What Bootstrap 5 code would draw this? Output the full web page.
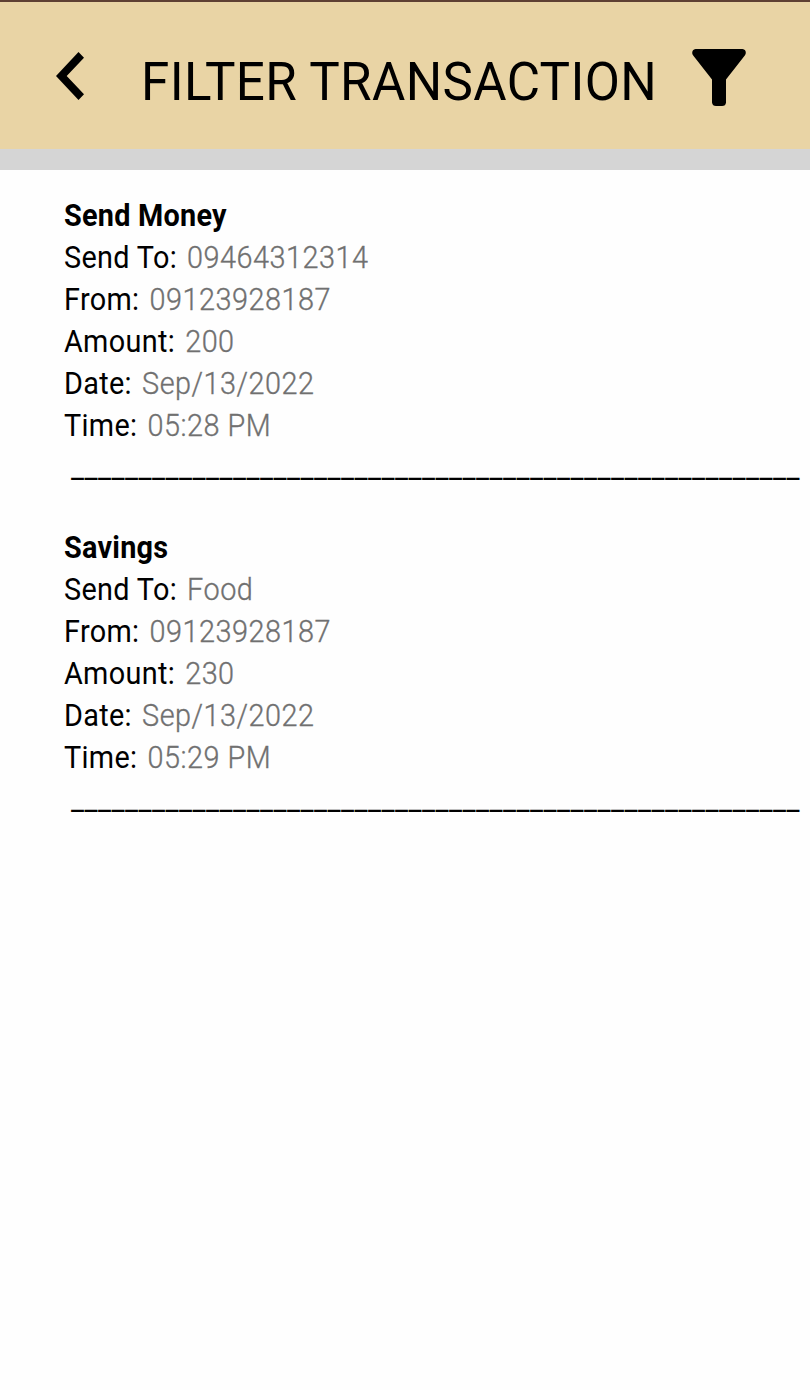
<!DOCTYPE html>
<html lang="en">
<head>
<meta charset="utf-8">
<meta name="viewport" content="width=device-width, initial-scale=1">
<title>Filter Transaction</title>
<link href="https://cdn.jsdelivr.net/npm/bootstrap@5.3.0/dist/css/bootstrap.min.css" rel="stylesheet">
<style>
body { font-family: Roboto, sans-serif; color: #000; background: #fefefe; min-height: 1390px; overflow-x: hidden; }
.topbar { height: 149px; background: #e9d4a5; border-top: 2px solid #5e3f33; padding-left: 56px; padding-right: 64px; }
.topbar-title { font-size: 54.5px; line-height: 64px; width: 514px; margin: 10px 0 0 57px; white-space: nowrap; }
.topbar-title span { display: inline-block; letter-spacing: .4px; transform-origin: 0 50%; transform: scaleX(.938); }
.back-icon { margin-top: 1px; }
.filter-icon { margin-top: 4px; }
.divider-band { height: 21px; background: #d5d5d5; }
.entries { margin: 25px 0 0 64px; font-size: 31px; line-height: 42px; letter-spacing: .46px; white-space: nowrap; transform-origin: 0 0; transform: scaleX(.93); }
.entry { margin-bottom: 38px; }
.entry dt, .entry dd { margin: 0; line-height: 42px; }
.entry dt { font-weight: 400; letter-spacing: .34px; margin-right: 2.9px; }
.entry dd { font-weight: 300; color: #707070; letter-spacing: .54px; -webkit-text-stroke: .35px #707070; }
.entry h2 { font-size: 31px; line-height: 42px; font-weight: 700; letter-spacing: .25px; }
.rule-text { padding-left: 7.5px; letter-spacing: .53px; }
</style>
</head>
<body>
<header class="topbar d-flex align-items-center">
  <a href="#" class="back-icon d-flex text-black" aria-label="Back"><svg width="28" height="48" viewBox="0 0 28 48"><path d="M22.5 0 28 5.7 10.7 24 28 42.2 22.5 48 0 24Z"/></svg></a>
  <h1 class="topbar-title fw-normal"><span>FILTER TRANSACTION</span></h1>
  <a href="#" class="filter-icon d-flex text-black ms-auto" aria-label="Filter"><svg width="54" height="57" viewBox="0 0 54 57"><path d="M3.5 0h47q3.5.5 3.3 4-.1 1.2-1 2.4L34 30.5v23q-.3 3.5-4 3.5h-6q-3.500 0-4-3.500v-23L1.200 6.400Q.2 5.200.2 4 .2.500 3.500 0Z"/></svg></a>
</header>
<div class="divider-band"></div>
<main class="entries">
  <section class="entry">
    <h2 class="m-0">Send Money</h2>
    <dl class="m-0">
      <div class="d-flex"><dt>Send To:&nbsp;</dt><dd>09464312314</dd></div>
      <div class="d-flex"><dt>From:&nbsp;</dt><dd>09123928187</dd></div>
      <div class="d-flex"><dt>Amount:&nbsp;</dt><dd>200</dd></div>
      <div class="d-flex"><dt>Date:&nbsp;</dt><dd>Sep/13/2022</dd></div>
      <div class="d-flex"><dt>Time:&nbsp;</dt><dd>05:28 PM</dd></div>
    </dl>
    <div class="rule-text">______________________________________________________</div>
  </section>
  <section class="entry">
    <h2 class="m-0">Savings</h2>
    <dl class="m-0">
      <div class="d-flex"><dt>Send To:&nbsp;</dt><dd>Food</dd></div>
      <div class="d-flex"><dt>From:&nbsp;</dt><dd>09123928187</dd></div>
      <div class="d-flex"><dt>Amount:&nbsp;</dt><dd>230</dd></div>
      <div class="d-flex"><dt>Date:&nbsp;</dt><dd>Sep/13/2022</dd></div>
      <div class="d-flex"><dt>Time:&nbsp;</dt><dd>05:29 PM</dd></div>
    </dl>
    <div class="rule-text">______________________________________________________</div>
  </section>
</main>
<script src="https://cdn.jsdelivr.net/npm/bootstrap@5.3.0/dist/js/bootstrap.bundle.min.js"></script>
</body>
</html>
